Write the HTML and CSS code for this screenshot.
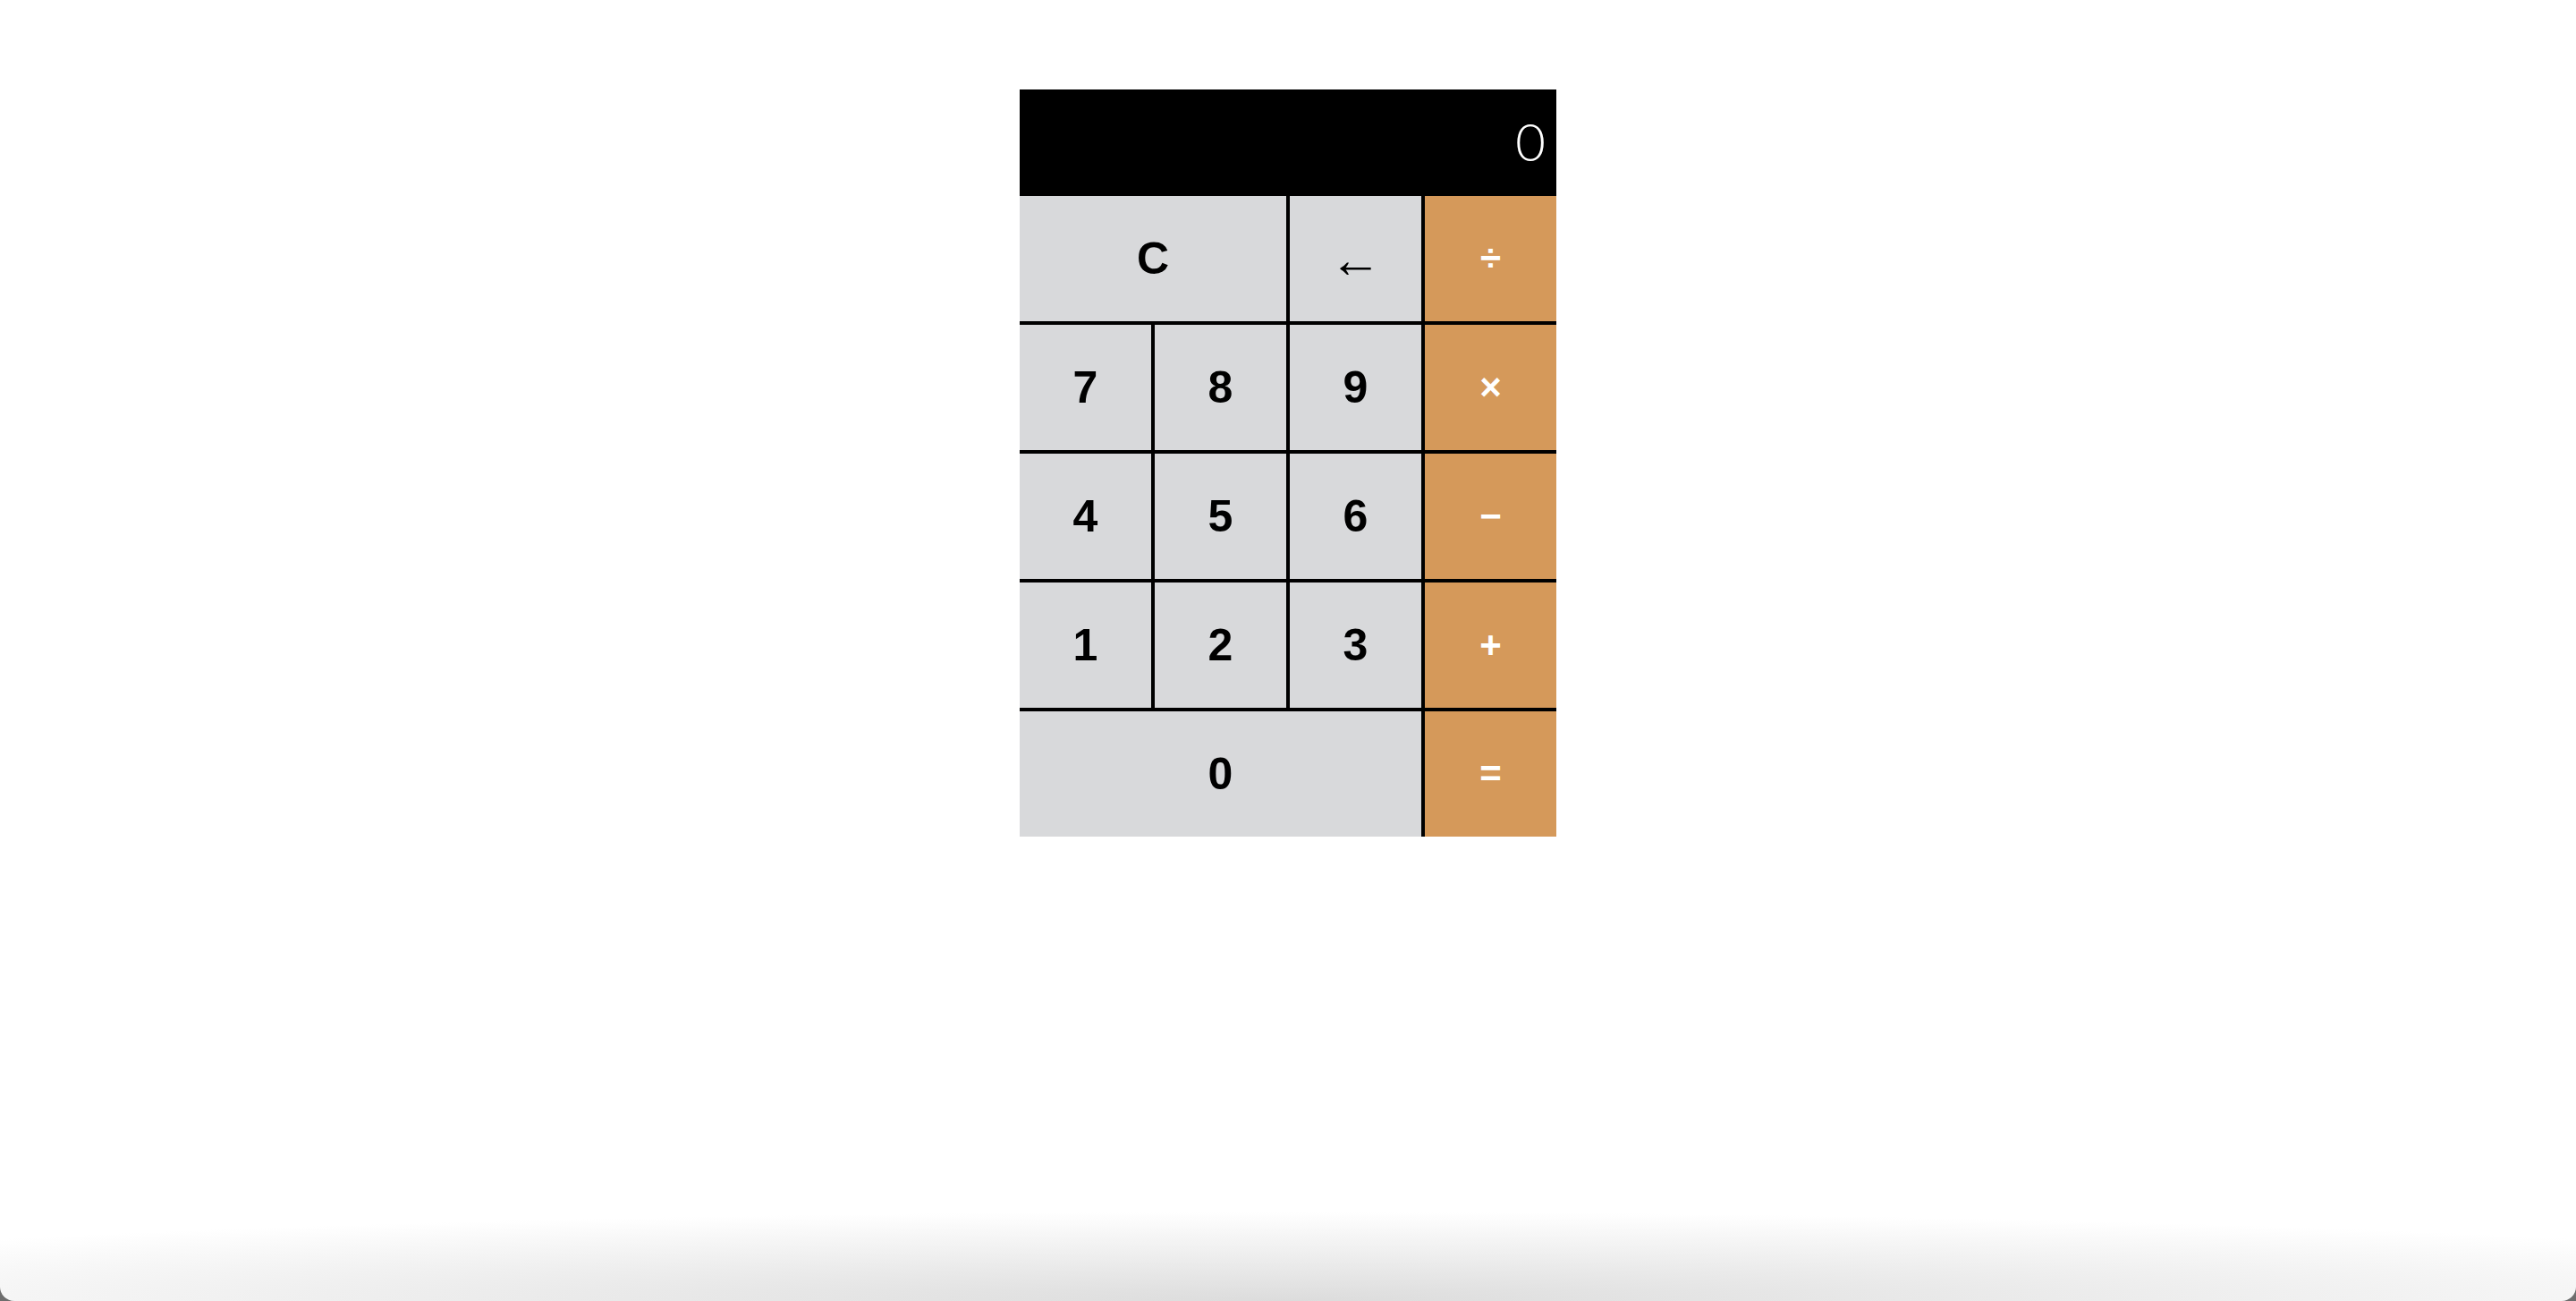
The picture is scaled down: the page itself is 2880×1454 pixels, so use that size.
FILE: index.html
```html
<!DOCTYPE html>
<html lang="en">
<head>
<meta charset="utf-8">
<title>Calculator</title>
<link rel="stylesheet" href="styles.css">
</head>
<body>
<div class="calculator">
  <div class="display">0</div>
  <button class="key span-2">C</button>
  <button class="key arrow">&larr;</button>
  <button class="key op">&divide;</button>
  <button class="key">7</button>
  <button class="key">8</button>
  <button class="key">9</button>
  <button class="key op">&times;</button>
  <button class="key">4</button>
  <button class="key">5</button>
  <button class="key">6</button>
  <button class="key op">&minus;</button>
  <button class="key">1</button>
  <button class="key">2</button>
  <button class="key">3</button>
  <button class="key op">+</button>
  <button class="key span-3">0</button>
  <button class="key op">=</button>
</div>
</body>
</html>
```

FILE: styles.css
```css
html {
  background: #6d6d6d;
  height: 100%;
}

body {
  margin: 0;
  height: 100%;
  box-sizing: border-box;
  padding-top: 100px;
  border-radius: 0 0 16px 16px;
  background:
    radial-gradient(ellipse 2000px 100px at 50% 100%, #dcdcdc 0%, rgba(255,255,255,0) 100%),
    #ffffff;
  font-family: "Liberation Sans", Arial, sans-serif;
}

.calculator {
  width: 600px;
  margin: 0 auto;
  display: grid;
  grid-template-columns: repeat(4, 1fr);
  grid-auto-rows: 140px;
  grid-template-rows: 115px;
  gap: 4px;
  background: #000;
}

.display {
  grid-column: span 4;
  background: #000;
  color: #fff;
  font-family: Lato, "Open Sans", sans-serif;
  font-weight: 300;
  font-size: 58px;
  display: flex;
  align-items: center;
  justify-content: flex-end;
  padding: 0 12px 0 0;
}

.key {
  border: none;
  margin: 0;
  padding: 0;
  background: #d8d9db;
  color: #000;
  font-family: "Liberation Sans Narrow", "Liberation Sans", Arial, sans-serif;
  font-weight: bold;
  font-size: 50px;
  cursor: pointer;
}

.span-2 {
  grid-column: span 2;
}

.span-3 {
  grid-column: span 3;
}

.arrow {
  font-family: "Liberation Sans", Arial, sans-serif;
  font-weight: normal;
  font-size: 58px;
}

.op {
  font-family: "Liberation Sans", Arial, sans-serif;
  background: #d5995a;
  color: #fff;
  font-size: 42px;
}
```
